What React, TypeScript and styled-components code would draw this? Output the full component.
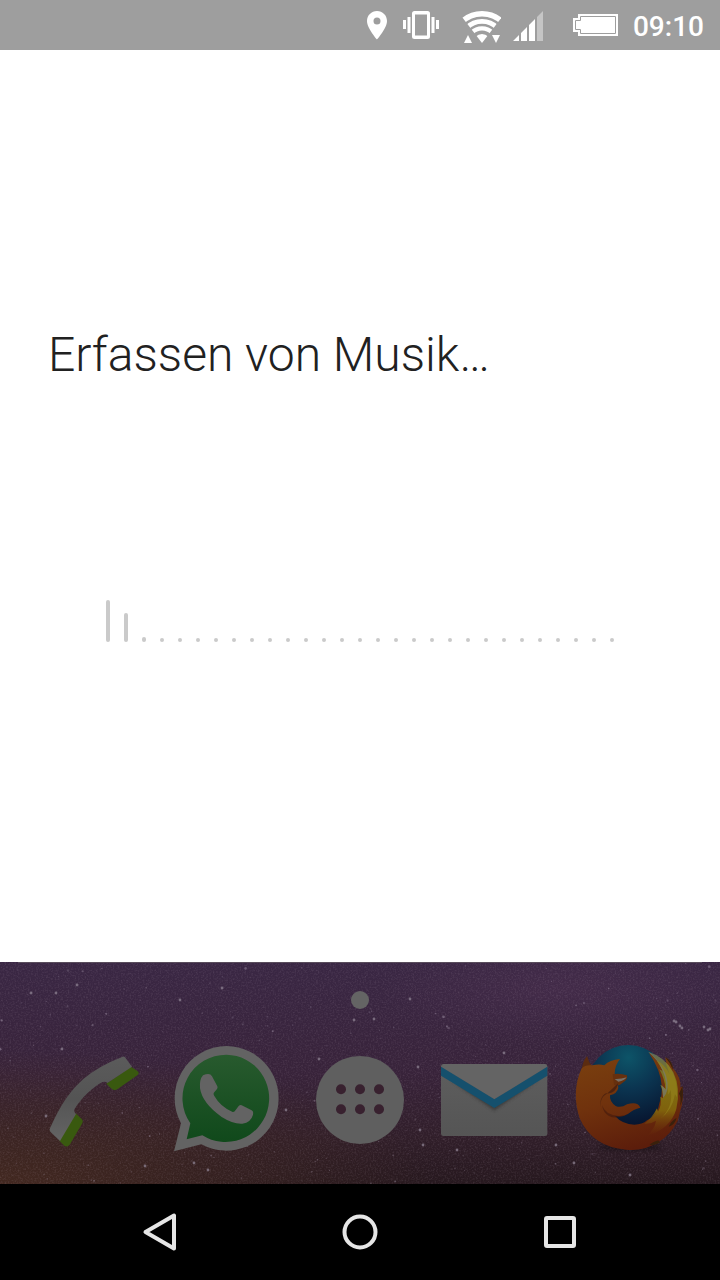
import React from "react";
import styled, { createGlobalStyle } from "styled-components";

const GlobalStyle = createGlobalStyle`
  * { box-sizing: border-box; }
  body { margin: 0; background: #000; font-family: Roboto, "Liberation Sans", sans-serif; }
  svg { display: block; }
`;

const Screen = styled.div`
  display: flex;
  flex-direction: column;
  min-height: 100vh;
`;

const StatusBar = styled.header`
  display: flex;
  justify-content: flex-end;
  align-items: center;
  gap: 12px;
  height: 50px;
  padding-right: 16px;
  background: #9e9e9e;
  color: #fff;
`;

const Clock = styled.time`
  font-size: 28px;
  font-weight: 500;
  line-height: 32px;
  padding-top: 4px;
`;

const ListeningPanel = styled.main`
  flex: 1;
  display: flex;
  flex-direction: column;
  gap: 217px;
  padding: 277px 48px 48px;
  background: #fff;
`;

const Title = styled.h1`
  margin: 0;
  font-size: 48px;
  font-weight: 300;
  line-height: 56px;
  color: #212121;
`;

const Equalizer = styled.div`
  display: flex;
  justify-content: center;
  align-items: flex-end;
  gap: 14px;
  height: 42px;
`;

const Bar = styled.span<{ $level: number }>`
  width: 4px;
  height: ${(p) => p.$level}px;
  border-radius: 2px;
  background: #cacaca;
`;

const Dock = styled.section`
  position: relative;
  display: flex;
  flex-direction: column;
  align-items: center;
  gap: 31px;
  padding: 29px 27px 24px;
  background: #38243a;

  &::before {
    content: "";
    position: absolute;
    z-index: 1;
    top: 0;
    left: 18px;
    right: 18px;
    height: 1px;
    background: #584c5b;
  }
`;

const Wallpaper = styled.svg`
  position: absolute;
  inset: 0;
  width: 100%;
  height: 100%;
`;

const PageDot = styled.span`
  position: relative;
  width: 18px;
  height: 18px;
  border-radius: 50%;
  background: #646464;
`;

const AppRow = styled.div`
  position: relative;
  display: grid;
  grid-template-columns: repeat(5, 1fr);
  justify-items: center;
  width: 100%;
`;

const IconButton = styled.button`
  padding: 0;
  border: 0;
  background: none;
`;

const NavBar = styled.nav`
  display: grid;
  grid-template-columns: repeat(3, 1fr);
  place-items: center;
  height: 96px;
  padding: 0 60px;
  background: #000;
`;

const levels = [42, 29, 5, ...Array(26).fill(4)];

/* Repeatable pseudo-random star field */
const stars = (() => {
  let seed = 41;
  const next = () => {
    seed = (seed * 16807) % 2147483647;
    return seed / 2147483647;
  };
  return Array.from({ length: 260 }, () => ({
    x: next() * 720,
    y: next() * 222,
    r: 0.5 + next() * next() * 1,
    o: 0.12 + next() * 0.4,
  }));
})();

const brightStars = [
  [31, 31], [56, 31], [77, 23], [180, 38], [222, 26], [62, 87], [46, 154], [286, 148],
  [319, 97], [354, 58], [145, 204], [194, 201], [208, 208], [418, 105], [457, 188],
  [504, 91], [420, 168], [574, 201], [630, 213], [676, 60], [680, 64], [674, 59], [682, 66],
  [704, 65], [708, 68], [710, 67], [374, 57], [410, 37], [556, 183], [423, 183],
];

const NightSky = () => (
  <Wallpaper viewBox="0 0 720 222" preserveAspectRatio="xMidYMid slice" aria-hidden="true">
    <defs>
      <linearGradient id="sky" x1="0" y1="0" x2="0" y2="1">
        <stop offset="0" stopColor="#3a2744" />
        <stop offset="0.5" stopColor="#38233a" />
        <stop offset="0.8" stopColor="#301e29" />
        <stop offset="1" stopColor="#26181e" />
      </linearGradient>
      <radialGradient id="ember" cx="0" cy="1" r="0.6">
        <stop offset="0" stopColor="#422820" />
        <stop offset="1" stopColor="#422820" stopOpacity="0" />
      </radialGradient>
      <radialGradient id="haze" cx="0.78" cy="0.12" r="0.25">
        <stop offset="0" stopColor="#4c3050" stopOpacity="0.5" />
        <stop offset="1" stopColor="#4c3050" stopOpacity="0" />
      </radialGradient>
      <filter id="grain" x="0" y="0" width="1" height="1">
        <feTurbulence type="fractalNoise" baseFrequency="0.6" numOctaves="2" seed="4" />
        <feColorMatrix values="0 0 0 0 0.6  0 0 0 0 0.48  0 0 0 0 0.58  1.2 0 0 0 -0.52" />
      </filter>
    </defs>
    <rect width="720" height="222" fill="url(#sky)" />
    <rect width="720" height="222" fill="url(#ember)" />
    <rect width="720" height="222" fill="url(#haze)" />
    <rect width="720" height="222" filter="url(#grain)" opacity="0.25" />
    {stars.map((s, i) => (
      <circle key={i} cx={s.x} cy={s.y} r={s.r} fill="#a99bb0" opacity={s.o} />
    ))}
    {brightStars.map(([x, y], i) => (
      <circle key={i} cx={x} cy={y} r="1.4" fill="#8d8292" opacity="0.75" />
    ))}
  </Wallpaper>
);

const LocationIcon = () => (
  <svg width="24" height="50" viewBox="365 0 24 50" fill="#fff" aria-hidden="true">
    <path
      fillRule="evenodd"
      d="M377 11c-5.600 0-10 4.400-10 10 0 7.300 10 18.500 10 18.500S387 28.300 387 21c0-5.600-4.400-10-10-10zm0 6.500a3.500 3.500 0 1 1 0 7 3.500 3.500 0 0 1 0-7z"
    />
  </svg>
);

const VibrateIcon = () => (
  <svg width="40" height="50" viewBox="401 0 40 50" fill="#fff" aria-hidden="true">
    <path
      fillRule="evenodd"
      d="M414.500 11h13a2.500 2.500 0 0 1 2.500 2.500v23a2.500 2.500 0 0 1-2.500 2.500h-13a2.500 2.500 0 0 1-2.500-2.500v-23a2.500 2.500 0 0 1 2.500-2.500zM415 14.500v21h12v-21z"
    />
    <path d="M403 20h3v9h-3zM407.500 17h3v16h-3zM431.500 17h3v16h-3zM436 20h3v9h-3z" />
  </svg>
);

const WifiIcon = () => (
  <svg width="48" height="50" viewBox="453 0 48 50" fill="#fff" aria-hidden="true">
    <clipPath id="fan">
      <path d="M482 43L462 17V6h40v11z" />
    </clipPath>
    <g clipPath="url(#fan)">
      <g fill="none" stroke="#fff">
        <circle cx="482" cy="43" r="29.200" strokeWidth="5.600" />
        <circle cx="482" cy="43" r="21.600" strokeWidth="4.800" />
        <circle cx="482" cy="43" r="14.600" strokeWidth="4.400" />
      </g>
      <circle cx="482" cy="43" r="9" />
    </g>
    <path d="M464 43l4-8 4 8zM492 35h8l-4 8z" />
  </svg>
);

const SignalIcon = () => (
  <svg width="30" height="50" viewBox="0 0 30 50" fill="#fff" aria-hidden="true">
    <path d="M0 41l6-6v6zM8 33l6-6v14H8zM16 25l6-6v22h-6z" />
    <path d="M24 17l6-6v30h-6z" opacity="0.4" />
  </svg>
);

const BatteryIcon = () => (
  <svg width="66" height="50" viewBox="555 0 66 50" aria-hidden="true">
    <path d="M573 18h5v-4h40v22h-40v-4h-5z" fill="#fff" />
    <path d="M575.500 20.500h5v-4h35v17h-35v-4h-5z" fill="none" stroke="#9e9e9e" />
  </svg>
);

const PhoneIcon = () => (
  <svg width="120" height="120" viewBox="12 0 360 360" aria-hidden="true">
    <defs>
      <linearGradient id="handset" x1="0" y1="0" x2="0" y2="1">
        <stop offset="0" stopColor="#5b5b5b" />
        <stop offset="0.5" stopColor="#545454" />
        <stop offset="1" stopColor="#646464" />
      </linearGradient>
    </defs>
    <path d="M303 80L321 92Q330 98 323 105L262 148Q252 154 243 145L229 131z" fill="#39590f" />
    <path d="M137 220L155 237Q161 243 156 251L119 314Q112 323 103 317L88 302z" fill="#39590f" />
    <path
      d="M276 51Q281 48 285 52L306 80 232 129Q226 123 218 126C188 141 156 172 134 206Q130 213 138 222L90 303 61 275Q57 271 60 265C92 192 122 151 160 117Q206 78 276 51z"
      fill="url(#handset)"
    />
  </svg>
);

const WhatsAppIcon = () => (
  <svg width="120" height="120" viewBox="6 15 360 360" aria-hidden="true">
    <defs>
      <linearGradient id="bubble" x1="0" y1="0" x2="0" y2="1">
        <stop offset="0" stopColor="#285a2e" />
        <stop offset="1" stopColor="#10491b" />
      </linearGradient>
    </defs>
    <path d="M185 33a157 157 0 1 1-76 295L27 349 48 265A157 157 0 0 1 185 33z" fill="#636363" />
    <path d="M185 59a131 131 0 1 1-73 242L65 313 76 265A131 131 0 0 1 185 59z" fill="url(#bubble)" />
    <path
      d="M114 121Q135 112 141 124L157 154Q160 161 149 170Q143 175 148 183Q166 215 203 231Q208 232 212 225L221 213Q226 208 233 212L260 226Q266 229 264 239Q258 262 232 266Q205 268 170 246Q112 205 105 160Q103 133 114 121z"
      fill="#636363"
    />
  </svg>
);

const AppsIcon = () => (
  <svg width="120" height="120" viewBox="0 180 360 360" aria-hidden="true">
    <circle cx="180" cy="360" r="132" fill="#5f5f5f" />
    {[328, 388].map((y) =>
      [123, 180, 237].map((x) => <circle key={`${x}-${y}`} cx={x} cy={y} r="15" fill="#38212f" />)
    )}
  </svg>
);

const MailIcon = () => (
  <svg width="120" height="120" viewBox="9 -30 360 360" aria-hidden="true">
    <defs>
      <linearGradient id="paper" x1="0" y1="0" x2="0" y2="1">
        <stop offset="0" stopColor="#5e5e5e" />
        <stop offset="1" stopColor="#555" />
      </linearGradient>
      <filter id="fold" x="-0.1" y="-0.2" width="1.2" height="1.5">
        <feGaussianBlur stdDeviation="5" />
      </filter>
    </defs>
    <rect x="33" y="42" width="319" height="216" rx="7" fill="url(#paper)" />
    <path d="M60 90L193 182 326 90 193 158z" fill="#333" opacity="0.7" filter="url(#fold)" />
    <path d="M40 42h305l7 8L193 148 33 50z" fill="#646464" />
    <path d="M33 50L193 148 352 50V77L193 174 33 77z" fill="#15506d" />
  </svg>
);

const FirefoxIcon = () => (
  <svg width="120" height="120" viewBox="3 15 360 360" aria-hidden="true">
    <defs>
      <radialGradient id="globe" cx="0.5" cy="0.15" r="0.85">
        <stop offset="0" stopColor="#0d5468" />
        <stop offset="0.45" stopColor="#0b3450" />
        <stop offset="1" stopColor="#07122c" />
      </radialGradient>
      <linearGradient id="fur" x1="0.2" y1="0" x2="0.5" y2="1">
        <stop offset="0" stopColor="#7a400f" />
        <stop offset="0.5" stopColor="#70320d" />
        <stop offset="1" stopColor="#5c1d0b" />
      </linearGradient>
      <linearGradient id="flame" x1="0.3" y1="0" x2="0.3" y2="1">
        <stop offset="0" stopColor="#5f6a5c" />
        <stop offset="0.35" stopColor="#807414" />
        <stop offset="0.7" stopColor="#7f600c" />
        <stop offset="1" stopColor="#6f360c" stopOpacity="0" />
      </linearGradient>
      <filter id="drop" x="-0.2" y="-1" width="1.4" height="3">
        <feGaussianBlur stdDeviation="8" />
      </filter>
    </defs>
    <ellipse cx="195" cy="336" rx="95" ry="10" fill="#000" opacity="0.4" filter="url(#drop)" />
    <circle cx="190" cy="155" r="125" fill="url(#globe)" />
    <path d="M66 63Q50 85 50 108L80 92Q71 82 66 63z" fill="#5b2c10" />
    <path
      d="M50 100Q62 88 82 91Q102 86 118 91Q134 74 165 72Q149 91 149 118L156 141 160 158Q157 175 135 181Q133 200 152 213Q168 220 186 208Q218 198 226 218Q205 222 190 236Q172 248 150 243Q172 268 208 269Q232 269 246 256Q278 245 283 205Q292 180 290 152Q287 105 252 54Q285 70 306 96L301 67Q319 76 324 100Q350 130 346 158L352 154Q358 195 345 230L338 258Q315 301 282 320Q235 350 183 344Q82 336 44 250Q18 170 50 100z"
      fill="url(#fur)"
    />
    <path d="M143 118Q162 113 186 121Q189 133 175 142Q160 157 147 149z" fill="#66300e" />
    <path d="M149 132Q167 133 185 127Q179 137 160 140z" fill="#777068" />
    <path d="M160 144Q151 179 123 175Q98 190 111 226Q99 190 126 176z" fill="#421c10" opacity="0.75" />
    <path d="M111 210Q120 239 160 243Q177 244 193 235Q156 255 132 243Q115 234 111 210z" fill="#43190d" opacity="0.6" />
    <path
      d="M249 50Q300 65 325 112Q348 160 334 222Q317 281 246 303Q270 280 273 257Q254 269 238 266Q260 251 276 220L279 230Q291 209 286 185L294 190Q295 168 286 149L301 161Q300 133 283 103L294 109Q278 73 249 50z"
      fill="url(#flame)"
    />
    <path d="M275 76Q307 121 310 179L317 165Q326 215 286 252Q322 225 330 178L336 187Q339 119 301 80L314 118Q298 88 275 76z" fill="#93801b" opacity="0.7" />
    <path d="M251 51Q276 67 290 99L285 90Q306 128 303 164L289 149Q294 168 294 188Q305 178 308 158Q310 100 251 51z" fill="#77796c" opacity="0.75" />
    <path d="M301 67Q323 77 324 105Q316 83 301 67zM352 154Q358 190 345 213Q350 185 342 176zM335 248Q329 270 311 275Q317 259 335 248zM280 316Q262 321 254 330Q269 332 285 323z" fill="#39200c" />
  </svg>
);

const BackIcon = () => (
  <svg width="48" height="48" fill="none" stroke="#e6e6e6" strokeWidth="4" strokeLinejoin="round" aria-hidden="true">
    <path d="M9.500 24L38 7.500v33z" />
  </svg>
);

const HomeIcon = () => (
  <svg width="48" height="48" fill="none" stroke="#e6e6e6" strokeWidth="4" aria-hidden="true">
    <circle cx="24" cy="24" r="15.500" />
  </svg>
);

const RecentsIcon = () => (
  <svg width="48" height="48" fill="none" stroke="#e6e6e6" strokeWidth="4" strokeLinejoin="round" aria-hidden="true">
    <rect x="10" y="10" width="28" height="28" rx="1" />
  </svg>
);

const apps = [
  { name: "Telefon", Icon: PhoneIcon },
  { name: "WhatsApp", Icon: WhatsAppIcon },
  { name: "Apps", Icon: AppsIcon },
  { name: "E-Mail", Icon: MailIcon },
  { name: "Firefox", Icon: FirefoxIcon },
];

const navigation = [
  { name: "Zurück", Icon: BackIcon },
  { name: "Startseite", Icon: HomeIcon },
  { name: "Letzte Apps", Icon: RecentsIcon },
];

export default function App() {
  return (
    <Screen>
      <GlobalStyle />
      <StatusBar>
        <LocationIcon />
        <VibrateIcon />
        <WifiIcon />
        <SignalIcon />
        <BatteryIcon />
        <Clock>09:10</Clock>
      </StatusBar>
      <ListeningPanel>
        <Title>Erfassen von Musik…</Title>
        <Equalizer aria-hidden="true">
          {levels.map((level, i) => (
            <Bar key={i} $level={level} />
          ))}
        </Equalizer>
      </ListeningPanel>
      <Dock>
        <NightSky />
        <PageDot />
        <AppRow>
          {apps.map(({ name, Icon }) => (
            <IconButton key={name} type="button" aria-label={name}>
              <Icon />
            </IconButton>
          ))}
        </AppRow>
      </Dock>
      <NavBar>
        {navigation.map(({ name, Icon }) => (
          <IconButton key={name} type="button" aria-label={name}>
            <Icon />
          </IconButton>
        ))}
      </NavBar>
    </Screen>
  );
}
